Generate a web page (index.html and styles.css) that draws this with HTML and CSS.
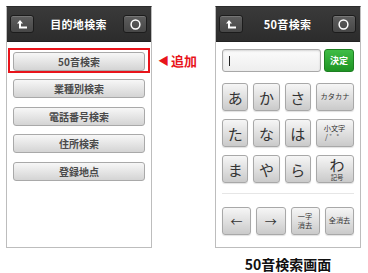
FILE: index.html
```html
<!DOCTYPE html>
<html lang="ja">
<head>
    <meta charset="UTF-8">
    <title>50音検索</title>
    <link rel="stylesheet" href="styles.css">
</head>
<body>
    <div class="stage">

        <!-- 目的地検索 -->
        <section class="phone">
            <header class="bar">
                <span class="bar-btn">
                    <svg width="10" height="9" viewBox="0 0 10 9"><path d="M3 0 L6 3.5 H4 V6.5 H10 V8.5 H2 V3.5 H0 Z" fill="#fff"/></svg>
                </span>
                <h1>目的地検索</h1>
                <span class="bar-btn">
                    <svg width="11" height="11" viewBox="0 0 11 11"><circle cx="5.5" cy="5.5" r="4.4" fill="none" stroke="#fff" stroke-width="1.5"/></svg>
                </span>
            </header>
            <div class="menu">
                <div class="highlight">
                    <span class="menu-btn">50音検索</span>
                </div>
                <span class="menu-btn">業種別検索</span>
                <span class="menu-btn">電話番号検索</span>
                <span class="menu-btn">住所検索</span>
                <span class="menu-btn">登録地点</span>
            </div>
        </section>

        <div class="note"><span class="note-arrow">◀</span>追加</div>

        <!-- 50音検索 -->
        <div class="column">
            <section class="phone">
                <header class="bar">
                    <span class="bar-btn">
                        <svg width="10" height="9" viewBox="0 0 10 9"><path d="M3 0 L6 3.5 H4 V6.5 H10 V8.5 H2 V3.5 H0 Z" fill="#fff"/></svg>
                    </span>
                    <h1>50音検索</h1>
                    <span class="bar-btn">
                        <svg width="11" height="11" viewBox="0 0 11 11"><circle cx="5.5" cy="5.5" r="4.4" fill="none" stroke="#fff" stroke-width="1.5"/></svg>
                    </span>
                </header>
                <div class="kana">
                    <div class="entry">
                        <div class="field"><span class="cursor"></span></div>
                        <span class="ok">決定</span>
                    </div>
                    <div class="keys">
                        <span class="key">あ</span>
                        <span class="key">か</span>
                        <span class="key">さ</span>
                        <span class="key key-small"><span>カタカナ</span></span>
                        <span class="key">た</span>
                        <span class="key">な</span>
                        <span class="key">は</span>
                        <span class="key key-small"><span>小文字<br>/ ゛゜</span></span>
                        <span class="key">ま</span>
                        <span class="key">や</span>
                        <span class="key">ら</span>
                        <span class="key key-wa">わ<small>記号</small></span>
                    </div>
                    <hr class="divider">
                    <div class="keys">
                        <span class="key key-arrow">←</span>
                        <span class="key key-arrow">→</span>
                        <span class="key key-small"><span>一字<br>消去</span></span>
                        <span class="key key-small"><span>全消去</span></span>
                    </div>
                </div>
            </section>
            <p class="caption">50音検索画面</p>
        </div>

    </div>
</body>
</html>
```

FILE: styles.css
```css
/* Page */
body {
    margin: 0;
    background: #ffffff;
    font-family: "Noto Sans CJK JP", "Noto Sans", sans-serif;
    color: #333333;
}

.stage {
    display: flex;
    align-items: flex-start;
    padding: 6px 0 0 6px;
}

/* Phone frame */
.phone {
    box-sizing: border-box;
    width: 146px;
    height: 242px;
    border: 1px solid #bdbdbd;
    border-top-color: #2c2c2c;
    background: #ffffff;
}

.bar {
    height: 34px;
    display: flex;
    align-items: center;
    justify-content: space-between;
    padding: 0 4px 0 3px;
    background: linear-gradient(#3a3a3a, #2c2c2c);
    border-bottom: 1px solid #222;
}

.bar h1 {
    margin: 0;
    font-size: 11px;
    font-weight: bold;
    color: #ffffff;
    letter-spacing: 0.3px;
}

.bar-btn {
    box-sizing: border-box;
    width: 24px;
    height: 18px;
    display: flex;
    align-items: center;
    justify-content: center;
    border: 1px solid #1c1c1c;
    border-radius: 3px;
    background: linear-gradient(#5e5e5e, #474747);
    box-shadow: inset 0 1px 0 rgba(255, 255, 255, 0.15);
}

/* Menu list */
.menu {
    display: flex;
    flex-direction: column;
    padding: 6px 6px 0;
}

.highlight {
    margin: 0 -5px 6px;
    padding: 2px 3px 0;
    border: 2px solid #e8141b;
}

.menu-btn {
    box-sizing: border-box;
    height: 19px;
    margin-bottom: 8.5px;
    display: flex;
    align-items: center;
    justify-content: center;
    border: 1px solid #a9a9a9;
    border-radius: 3px;
    background: linear-gradient(#f7f7f7, #d4d4d4);
    font-size: 10px;
    font-weight: bold;
    color: #4a4a4a;
}

.highlight .menu-btn {
    margin-bottom: 0;
}

/* Annotation */
.note {
    width: 63px;
    padding: 46px 0 0 6px;
    box-sizing: border-box;
    font-size: 13px;
    font-weight: bold;
    color: #e8141b;
    line-height: 16px;
}

.note-arrow {
    font-size: 11px;
    margin-right: 2px;
    vertical-align: 1px;
}

/* Kana keyboard */
.column {
    display: flex;
    flex-direction: column;
    align-items: center;
}

.kana {
    padding: 7px 6px 0;
}

.entry {
    display: flex;
    gap: 3px;
    margin-bottom: 11px;
}

.field {
    flex: 1;
    box-sizing: border-box;
    height: 23px;
    display: flex;
    align-items: center;
    padding-left: 6px;
    border: 1px solid #a8a8a8;
    border-radius: 3px;
    background: linear-gradient(#fbfbfb, #eeeeee);
    box-shadow: inset 0 1px 2px rgba(0, 0, 0, 0.15);
}

.cursor {
    width: 1px;
    height: 10px;
    background: #222;
}

.ok {
    box-sizing: border-box;
    width: 30px;
    height: 23px;
    display: flex;
    align-items: center;
    justify-content: center;
    border: 1px solid #1e7f22;
    border-radius: 3px;
    background: linear-gradient(#3fbd45, #1e9424);
    color: #ffffff;
    font-size: 9px;
    font-weight: bold;
}

.keys {
    display: grid;
    grid-template-columns: repeat(4, 1fr);
    gap: 8px 5px;
}

.key {
    box-sizing: border-box;
    height: 28px;
    display: flex;
    align-items: center;
    justify-content: center;
    border: 1px solid #a8a8a8;
    border-radius: 3px;
    background: linear-gradient(#f6f6f6, #cacaca);
    box-shadow: 0 1px 1px rgba(0, 0, 0, 0.12);
    font-size: 15px;
    color: #333333;
}

.key-small {
    font-size: 9px;
    line-height: 12px;
    text-align: center;
    white-space: nowrap;
}

.key-small span {
    transform: scale(0.8);
}

.key-arrow {
    font-size: 12px;
}

.key-wa {
    flex-direction: column;
    line-height: 16px;
    padding-left: 4px;
}

.key-wa small {
    font-size: 9px;
    line-height: 9px;
    transform: scale(0.7);
}

.divider {
    margin: 10px 0 13px;
    border: 0;
    border-top: 1px solid #e6e6e6;
}

.caption {
    margin: 8px 0 0;
    font-size: 14px;
    line-height: 16px;
    font-weight: bold;
    color: #111111;
}
```
